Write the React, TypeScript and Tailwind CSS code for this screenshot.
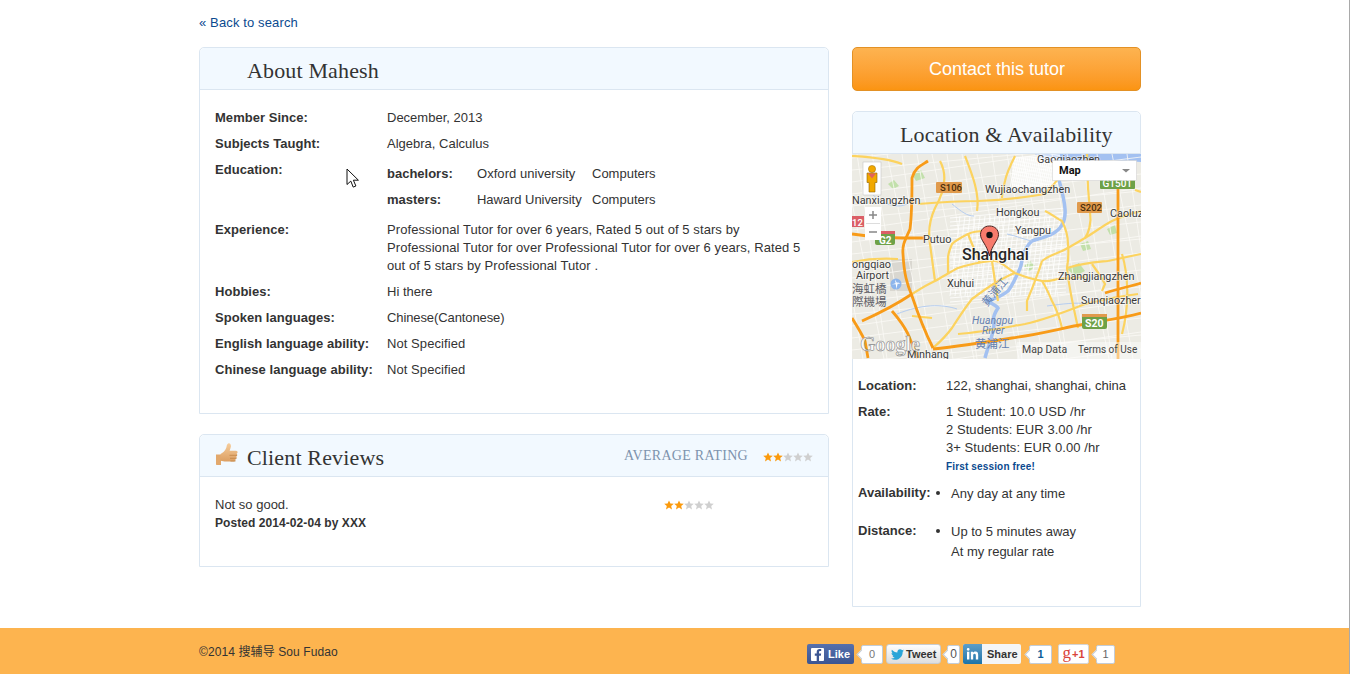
import React from "react";
import { FaFacebookF, FaTwitter, FaLinkedinIn } from "react-icons/fa";

const serif = { fontFamily: '"Liberation Serif", serif' };

function Star({ on }: { on: boolean }) {
  return (
    <svg width="10" height="10" viewBox="0 0 10 10">
      <path d="M5 .4 6.4 3.5 9.8 3.8 7.2 6 8 9.4 5 7.6 2 9.4 2.8 6 .2 3.8 3.600 3.500Z" fill={on ? "#fb9a0c" : "#cfcfcf"} />
    </svg>
  );
}
function Stars() {
  return (
    <div className="flex">
      {[0, 1, 2, 3, 4].map((i) => (
        <Star key={i} on={i < 2} />
      ))}
    </div>
  );
}

function Row({ label, children }: { label: string; children: React.ReactNode }) {
  return (
    <div className="grid grid-cols-[172px_1fr] pb-2">
      <div className="font-bold tracking-[0.04px]">{label}</div>
      <div>{children}</div>
    </div>
  );
}

function Header({ children, className = "" }: { children: React.ReactNode; className?: string }) {
  return (
    <div className={"h-[42px] bg-[#f2f9ff] border-b border-[#dbe6f1] flex items-center rounded-t-[5px] " + className}>
      {children}
    </div>
  );
}

function Thumb() {
  return (
    <svg width="24" height="24" viewBox="0 0 24 24" className="mr-2 mb-[1px]">
      <defs>
        <linearGradient id="th" x1="0" y1="0" x2="0" y2="1">
          <stop offset="0" stopColor="#f6cd9c" />
          <stop offset="1" stopColor="#dc9f62" />
        </linearGradient>
      </defs>
      <path d="M1 11.500h5v10.500H2c-.6 0-1-.4-1-1Z" fill="#e2a86c" />
      <path d="M5.500 11c2-1 4.700-3.200 5.700-6 .6-1.700.5-3.800 2-4.500 1.700-.6 2.900 1 2.700 3-.2 1.500-1 3-1.200 4.200h6.400c1.700 0 2.100 2.500.5 3 1.100.8.800 2.500-.4 2.800.8.900.4 2.300-.8 2.600.5 1-.1 2.400-1.400 2.500H11c-2 0-3.500-.9-5.500-.9Z" fill="url(#th)" />
      <path d="M14.500 12.300h7.500M15 15.300h6.500M15.500 18h5" stroke="#c08547" strokeWidth=".8" fill="none" />
    </svg>
  );
}

function MapArt() {
  const whiteGrid: string[] = [];
  for (let i = 0; i < 24; i++) {
    whiteGrid.push(`M${-40 + i * 15} 0 L${i * 15 - 10 + (i % 3) * 6} 205`);
    whiteGrid.push(`M0 ${-20 + i * 12} L289 ${i * 12 - 62 + (i % 4) * 5}`);
  }
  const dense: string[] = [];
  for (let i = 0; i < 22; i++) {
    dense.push(`M${108 + i * 5} 62 L${98 + i * 5} 142`);
    dense.push(`M98 ${64 + i * 4} L214 ${54 + i * 4}`);
    dense.push(`M${164 + i * 2} 3 L${158 + i * 2} 34`);
    dense.push(`M160 ${4 + i * 1.4} L208 ${i * 1.4}`);
  }
  const yellow = [
    "M0 2 C15 3 35 4 50 10", "M88 7 C95 20 94 35 83 54 C78 65 76 78 78 90 C80 105 82 120 83 127", "M113 2 C120 20 128 40 125 57",
    "M66 50 C90 48 110 47 126 47 C150 46 170 44 193 40 C200 32 206 26 210 20", "M163 2 C158 12 154 22 153 27 C151 35 150 40 150 44", "M236 34 L238 57 C240 70 236 80 233 84",
    "M133 77 C125 77 118 79 116 80 C108 84 102 88 100 90 C97 97 96 100 96 104 L96 119",
    "M60 140 C68 135 76 130 83 127 C92 122 100 117 106 114 C118 110 128 108 140 107 C148 106 152 112 163 119",
    "M163 119 C155 122 150 125 143 129 C135 134 128 139 120 145 C112 155 106 165 100 174 C94 182 88 188 81 194",
    "M163 119 C170 122 180 125 190 127 C196 128 201 126 206 125 L233 123", "M190 107 C186 120 180 135 175 147 L175 157",
    "M190 107 C196 102 203 100 210 97 C218 93 226 88 233 84 C243 78 252 71 260 67 C270 62 280 59 289 57",
    "M193 57 C200 60 205 65 210 67 C214 75 216 82 216 90 C217 100 216 108 215 114 C217 135 222 155 226 174",
    "M140 107 C142 120 144 135 146 147", "M190 127 C194 133 197 140 200 147 C205 156 208 165 210 174", "M240 110 C245 117 250 124 253 130 L250 137",
    "M256 107 L289 100", "M106 180 C130 178 150 174 173 170 C195 165 215 157 233 150 C250 146 268 142 286 140", "M60 162 L80 164",
    "M0 108 C15 105 30 104 46 105", "M235 0 L236 34", "M283 36 L289 38", "M270 100 C276 120 278 150 270 180", "M215 114 C235 108 245 108 256 107",
    "M116 80 C120 90 124 100 128 109",
  ];
  const orange = [
    "M76 7 C70 11 63 13 60 24 C60 40 60 60 58 75 C54 85 50 90 51 100 C52 120 55 130 60 142 C66 160 74 180 81 194",
    "M0 80 C25 84 45 84 73 84", "M81 195 C110 192 135 188 160 184 C190 180 210 174 233 170 C255 166 270 164 289 159",
    "M10 167 C30 158 45 150 60 140", "M289 129 C275 133 262 136 253 139", "M266 35 L266 205", "M0 164 C5 172 10 180 13 187 L16 204", "M40 157 C47 165 52 172 56 180 L66 204",
  ];
  const labels: [string, number, number][] = [
    ["Gaoqiaozhen", 185, 9],
    ["Wujiaochangzhen", 133, 39],
    ["Nanxiangzhen", 0, 50],
    ["Hongkou", 144, 62],
    ["Caoluz", 258, 63],
    ["Putuo", 71, 89],
    ["Yangpu", 163, 80],
    ["Zhangjiangzhen", 206, 126],
    ["Xuhui", 95, 133],
    ["Sunqiaozher", 229, 150],
    ["ongqiao", 0, 114],
    ["Airport", 4, 125],
    ["Minhang", 55, 204],
  ];
  return (
    <svg viewBox="0 0 289 205" width="289" height="205" className="block" style={{ fontFamily: '"Roboto", "Liberation Sans", "Noto Sans CJK TC", sans-serif' }}>
      <rect width="289" height="205" fill="#ecebe4" />
      <path d="M183 0 H289 V8 C260 6 230 6 205 8 C195 8 188 5 183 0Z" fill="#a3c1f1" />
      <path d="M38 105 h22 v32 h-22z" fill="#d9d7d0" />
      <path d="M215 115 l12 -6 6 8 -10 5z M60 20 l9 -4 4 8 -9 3z M172 112 l6-5 5 5-6 6z M36 30 l6 -4 5 6 -6 3z M228 90 l8-3 3 8-8 2z M255 75 l8 -4 2 8 -7 2z" fill="#c2e0ab" />
      {whiteGrid.map((d, i) => <path key={i} d={d} stroke="#fbfaf6" strokeWidth=".8" fill="none" />)}
      {dense.map((d, i) => <path key={i} d={d} stroke="#ffffff" strokeWidth=".8" fill="none" />)}
      <path d="M203 10 C206 25 212 40 213 55 C214 68 208 76 200 80 C192 84 184 85 180 87 C174 92 172 98 170 104 C170 110 168 115 166 119 C162 127 160 132 156 137 C150 142 142 145 136 147 C140 150 145 152 146 154 C142 160 140 165 142 170 C142 180 136 192 133 204" stroke="#a3c1f1" strokeWidth="3.500" fill="none" />
      <path d="M20 40 C30 50 45 55 55 50 M100 50 C110 58 115 62 122 62 M180 87 C170 85 165 82 155 80 M235 150 C225 148 210 150 195 152 M45 160 C70 150 90 150 105 155" stroke="#b5cdf0" strokeWidth="1" fill="none" />
      {yellow.map((d, i) => <path key={i} d={d} stroke="#fcd35f" strokeWidth="2.200" fill="none" />)}
      {orange.map((d, i) => <path key={i} d={d} stroke="#f89b18" strokeWidth="2.800" fill="none" />)}
      <g fontSize="10.800" fill="#3a3a3a">
        {labels.map(([t, x, y]) => <text key={t} x={x} y={y} stroke="#fff" strokeWidth="1.500" paintOrder="stroke" strokeOpacity=".55">{t}</text>)}
      </g>
      <text x="110" y="106" fontSize="16" fontWeight="500" fill="#262626" stroke="#fff" strokeWidth="2" paintOrder="stroke" strokeOpacity=".75">Shanghai</text>
      <g fontSize="11.500" fill="#5e5e66">
        <text x="0" y="139">海虹橋</text>
        <text x="0" y="152">際機場</text>
      </g>
      <g fill="#6480b0" fontSize="10.500">
        <text x="120" y="170" fontStyle="italic">Huangpu</text>
        <text x="130" y="180" fontStyle="italic">River</text>
        <text x="123" y="194" fontSize="11.500">黄浦江</text>
        <text x="0" y="0" transform="translate(135 153) rotate(-50)" fontSize="11">黄浦江</text>
      </g>
      <rect x="0" y="62" width="12" height="11" fill="#db5f67" />
      <text x="0" y="71.500" fontSize="9.500" fontWeight="500" fill="#fff">12</text>
      <rect x="84" y="28" width="26" height="11" rx="1" fill="#e09a4c" />
      <text x="88" y="37" fontSize="9.500" fontWeight="500" fill="#4b2f0e">S106</text>
      <rect x="225" y="48" width="25" height="11" rx="1" fill="#e09a4c" />
      <text x="228" y="57" fontSize="9.500" fontWeight="500" fill="#4b2f0e">S202</text>
      <rect x="248" y="20" width="35" height="15" rx="1" fill="#6ea147" />
      <text x="250.500" y="33" fontSize="10" fontWeight="500" fill="#fff">G1501</text>
      <rect x="23" y="77" width="20" height="14" rx="2" fill="#6ea147" />
      <rect x="23" y="77" width="20" height="3" fill="#db5f67" />
      <text x="27" y="89.500" fontSize="10" fontWeight="700" fill="#fff">G2</text>
      <rect x="230" y="160" width="25" height="15" rx="2" fill="#6ea147" />
      <rect x="230" y="160" width="25" height="3" fill="#e09a4c" />
      <text x="233" y="173" fontSize="10.500" fontWeight="700" fill="#fff">S20</text>
      <circle cx="44" cy="130" r="5.500" fill="#8db5ec" />
      <path d="M39.500 130.500l9-1-2.500-1zM43 125.500l1.500 9.500 1-5z" fill="#fff" />
      <rect x="165" y="188" width="124" height="17" fill="#fff" fillOpacity=".45" />
      <text x="170" y="199" fontSize="10.500" fill="#444">Map Data</text>
      <text x="226" y="199" fontSize="10" fill="#444">Terms of Use</text>
      <text x="8" y="197" fontSize="20" fontWeight="700" fill="#fff" fillOpacity=".8" stroke="#8a8a8a" strokeWidth=".6" style={{ fontFamily: '"Liberation Serif", serif' }}>Google</text>
      <path d="M137.500 72c-5.500 0-9 3.800-9 8.600 0 5.800 6.200 9.500 9 21.400 2.800-11.900 9-15.600 9-21.400 0-4.800-3.500-8.600-9-8.600z" fill="#f77b6c" stroke="#4a2420" strokeWidth="1" />
      <circle cx="137.500" cy="81" r="3.200" fill="#111" />
      <rect x="11" y="8" width="18" height="33" fill="#fff" stroke="#bbb" strokeWidth=".5" />
      <circle cx="20" cy="15" r="3.600" fill="#f1a800" stroke="#9a6b00" strokeWidth=".5" />
      <path d="M15 19h10v9.500h-2V38h-6v-9.500h-2z" fill="#f1a800" stroke="#8d6200" strokeWidth=".6" />
      <path d="M16 19.500h8l-4 5z" fill="#e1625c" />
      <rect x="13" y="53" width="16" height="33" fill="#fff" />
      <path d="M14 69.500h14" stroke="#ddd" />
      <path d="M17 61h8M21 57v8M17 78h8" stroke="#888" strokeWidth="1.500" />
      <rect x="200.500" y="6.500" width="84" height="20" fill="#fff" stroke="#ccc" strokeWidth=".5" />
      <text x="207" y="20" fontSize="11" fontWeight="700" fill="#111">Map</text>
      <path d="M270 15h8l-4 3.500z" fill="#888" />
    </svg>
  );
}

function Count({ children, w, className = "" }: { children: React.ReactNode; w: string; className?: string }) {
  return (
    <div className={"relative h-[19px] bg-white border border-[#c3ccd6] rounded-[2px] flex items-center justify-center text-[11px] " + w + " " + className}>
      <span className="absolute left-[-4px] top-[5px] w-[7px] h-[7px] rotate-45 bg-white border-l border-b border-[#c3ccd6]" />
      <span className="relative">{children}</span>
    </div>
  );
}

function Dot() {
  return (
    <span className="w-[15px] h-[18px] flex items-center">
      <span className="w-[4px] h-[4px] rounded-full bg-[#333]" />
    </span>
  );
}

export default function App() {
  return (
    <div className="min-h-[674px] bg-white border-r border-[#a9a9a9] text-[13px] leading-[18px] text-[#333]" style={{ fontFamily: '"Liberation Sans", "Noto Sans CJK SC", sans-serif' }}>
      <div className="relative w-[942px] ml-[199px] pt-[14px] pb-[21px]">
        <a className="block text-[#0b4a8f] mb-[15px] tracking-[0.13px]">« Back to search</a>
        <div className="flex justify-between items-start">
          <div className="w-[630px] flex flex-col gap-5">
            <section className="border border-[#dbe6f1] rounded-t-[5px]">
              <Header className="pl-[47px]">
                <h2 className="text-[22px] leading-none text-[#333] pt-[4px] tracking-[0.15px]" style={serif}>About Mahesh</h2>
              </Header>
              <div className="pl-[15px] pr-[24px] pt-[19px] pb-[26px]">
                <Row label="Member Since:">December, 2013</Row>
                <Row label="Subjects Taught:">Algebra, Calculus</Row>
                <Row label="Education:">
                  <div className="pt-1">
                    <div className="grid grid-cols-[90px_115px_1fr] pb-2">
                      <b>bachelors:</b><span className="tracking-[0.05px]">Oxford university</span><span>Computers</span>
                    </div>
                    <div className="grid grid-cols-[90px_115px_1fr] pb-1">
                      <b>masters:</b><span className="tracking-[-0.05px]">Haward University</span><span>Computers</span>
                    </div>
                  </div>
                </Row>
                <Row label="Experience:">
                  <span className="tracking-[0.08px]">Professional Tutor for over 6 years, Rated 5 out of 5 stars by Professional Tutor for over Professional Tutor for over 6 years, Rated 5 out of 5 stars by Professional Tutor .</span>
                </Row>
                <Row label="Hobbies:">Hi there</Row>
                <Row label="Spoken languages:"><span className="tracking-[-0.1px]">Chinese(Cantonese)</span></Row>
                <Row label="English language ability:"><span className="tracking-[0.07px]">Not Specified</span></Row>
                <Row label="Chinese language ability:"><span className="tracking-[0.07px]">Not Specified</span></Row>
              </div>
            </section>
            <section className="border border-[#dbe6f1] rounded-t-[5px] h-[133px]">
              <Header className="pl-[15px] pr-[15px]">
                <Thumb />
                <h2 className="text-[22px] leading-none pt-[5px] tracking-[0.15px]" style={serif}>Client Reviews</h2>
                <span className="ml-auto text-[14px] pt-[1px] text-[#7d93ad] tracking-[0.3px]" style={serif}>AVERAGE RATING</span>
                <div className="ml-[15px] pt-[2px]"><Stars /></div>
              </Header>
              <div className="pl-[15px] pt-[19px] flex">
                <div className="w-[449px]">
                  <div>Not so good.</div>
                  <div className="font-bold text-[12px] tracking-[0.07px]">Posted 2014-02-04 by XXX</div>
                </div>
                <div className="pt-1"><Stars /></div>
              </div>
            </section>
          </div>
          <div className="w-[289px] flex flex-col gap-5">
            <button className="h-[44px] w-full pl-[1px] rounded-[5px] border border-[#e39125] bg-gradient-to-b from-[#fdb350] to-[#fb9410] text-white text-[18px]">Contact this tutor</button>
            <section className="border border-[#dbe6f1] rounded-t-[5px] h-[496px]">
              <Header className="pl-[47px]">
                <h2 className="text-[22px] leading-none pt-[4px] tracking-[0.18px] whitespace-nowrap" style={serif}>Location &amp; Availability</h2>
              </Header>
              <div className="-mx-px"><MapArt /></div>
              <div className="pl-[5px] pt-[18px]">
                <div className="grid grid-cols-[88px_1fr] pb-2"><b>Location:</b><span>122, shanghai, shanghai, china</span></div>
                <div className="grid grid-cols-[88px_1fr] pb-[7px]">
                  <b>Rate:</b>
                  <div className="tracking-[0.06px]">
                    <div>1 Student: 10.0 USD /hr</div>
                    <div>2 Students: EUR 3.00 /hr</div>
                    <div>3+ Students: EUR 0.00 /hr</div>
                    <div className="text-[10px] font-bold text-[#0b4a8f] leading-[20px] tracking-[0.15px]">First session free!</div>
                  </div>
                </div>
                <div className="flex h-[38px]">
                  <b className="w-[78px] shrink-0">Availability:</b>
                  <Dot />
                  <span className="pt-[1px]">Any day at any time</span>
                </div>
                <div className="flex">
                  <b className="w-[78px] shrink-0">Distance:</b>
                  <Dot />
                  <div className="leading-[20px]"><div>Up to 5 minutes away</div><div>At my regular rate</div></div>
                </div>
              </div>
            </section>
          </div>
        </div>
        <svg className="absolute left-[147px] top-[168px]" width="14" height="21" viewBox="0 0 14 21">
          <path d="M1 1v15.500l3.800-3.400 2.400 6 2.700-1.100-2.500-5.800h5Z" fill="#fff" stroke="#111" strokeWidth="1" />
        </svg>
      </div>
      <footer className="h-[46px] bg-[#fdb44f]">
        <div className="relative w-[942px] ml-[199px] flex items-center h-full text-[12px] text-[#333]">
          <div className="w-[608px] mt-[1px] tracking-[0.1px]">©2014 搜辅导 Sou Fudao</div>
          <div className="flex items-center mt-[6px] font-bold text-[11px]">
            <div className="w-[47px] h-[20px] rounded-[2px] bg-gradient-to-b from-[#5670ad] to-[#3b5592] text-white flex items-center pl-[4px] gap-[4px]">
              <span className="w-[13px] h-[13px] bg-white rounded-[1px] flex items-end justify-end overflow-hidden"><FaFacebookF className="text-[#3b5592] text-[12px]" /></span>
              Like
            </div>
            <Count w="w-[22px] ml-[7px]" className="font-normal text-[#777]">0</Count>
            <div className="w-[55px] h-[20px] ml-[3px] rounded-[3px] border border-[#c8ccd0] bg-gradient-to-b from-[#fdfdfd] to-[#dedede] flex items-center pl-[4px] gap-[2px] text-[#333]">
              <FaTwitter className="text-[#2aa5d8] text-[13px]" />
              Tweet
            </div>
            <Count w="w-[13px] ml-[6px]" className="font-normal text-[#555] text-[12px]">0</Count>
            <div className="w-[58px] h-[20px] ml-[3px] flex rounded-[2px] overflow-hidden bg-[#f4f5f6] text-[#333]">
              <span className="w-[19px] bg-gradient-to-b from-[#5d9ec9] to-[#1a74a8] flex items-center justify-center"><FaLinkedinIn className="text-white text-[13px]" /></span>
              <span className="pl-[5px] leading-[21px]">Share</span>
            </div>
            <Count w="w-[23px] ml-[8px]" className="text-[#0b5d99]">1</Count>
            <div className="w-[31px] h-[20px] ml-[6px] rounded-[2px] border border-[#d4d4d4] bg-white flex items-center justify-center gap-[1px] text-[#d9443a]">
              <span className="text-[17px] font-normal leading-none mb-[3px]" style={serif}>g</span>
              <span className="text-[11px] font-bold">+1</span>
            </div>
            <Count w="w-[19px] ml-[7px]" className="font-normal text-[#666]">1</Count>
          </div>
        </div>
      </footer>
    </div>
  );
}
